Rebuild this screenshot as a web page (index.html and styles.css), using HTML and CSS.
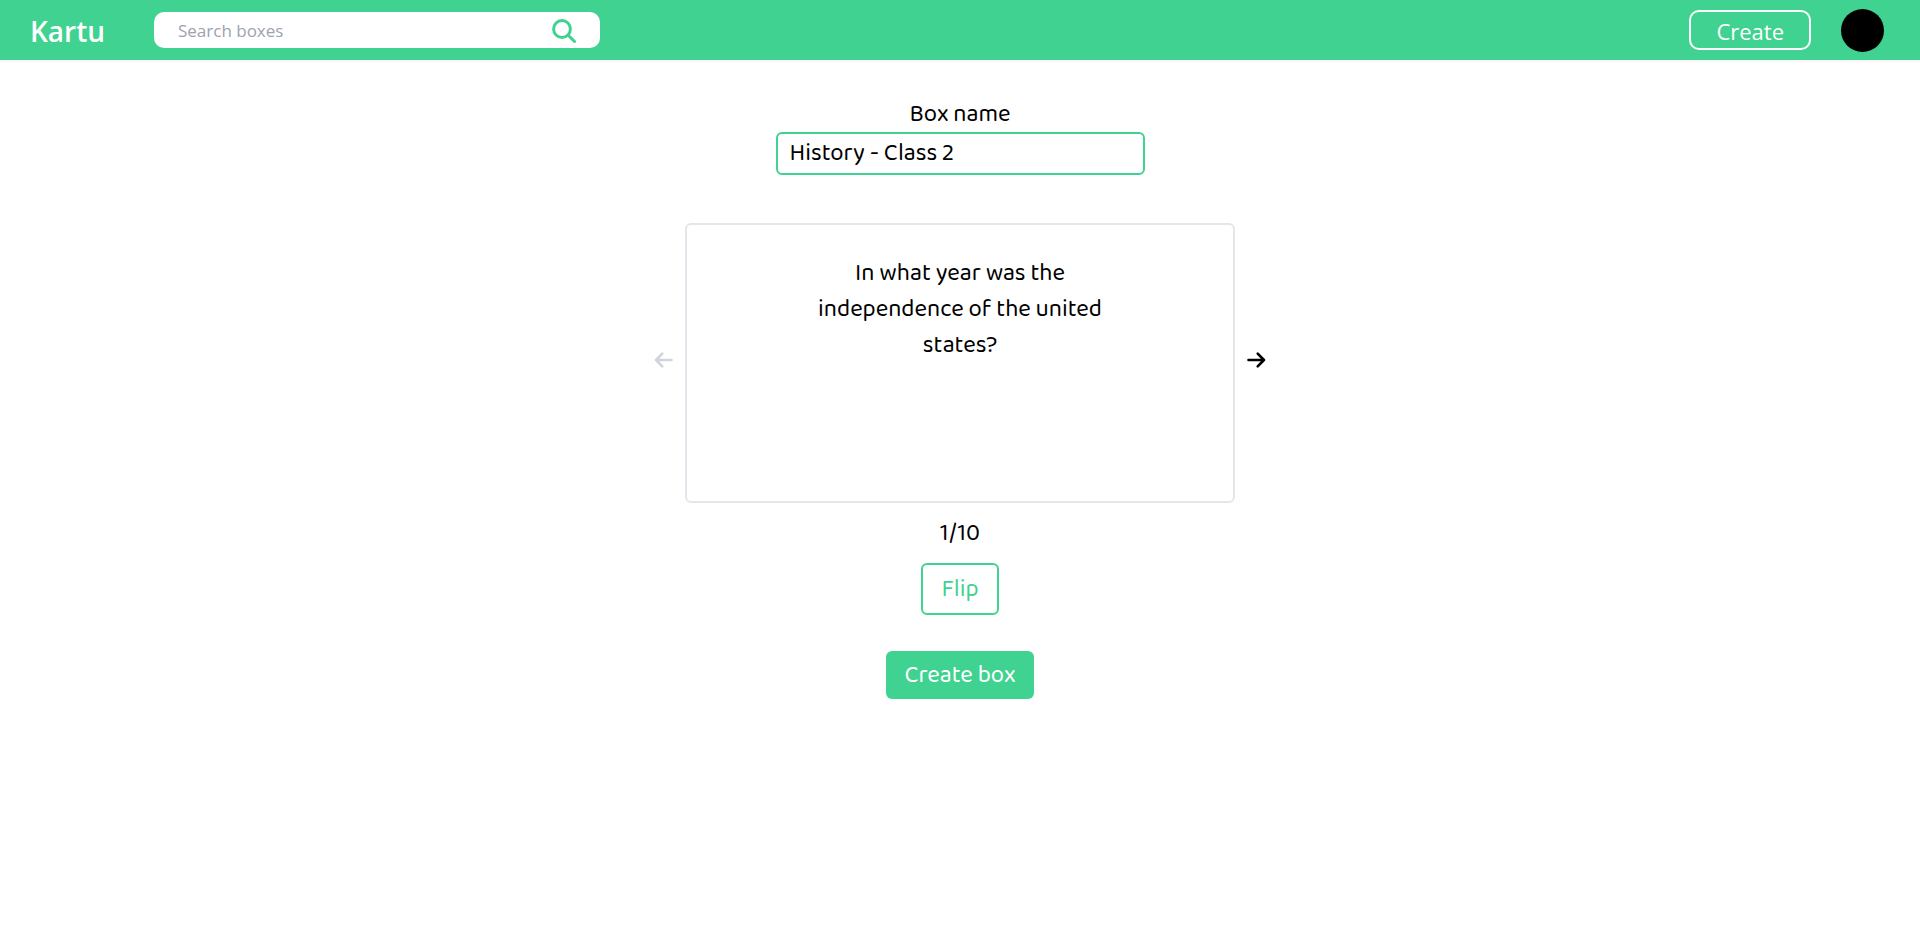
FILE: index.html
```html
<!DOCTYPE html>
<html lang="en">
<head>
  <meta charset="UTF-8">
  <meta name="viewport" content="width=device-width, initial-scale=1.0">
  <title>Kartu</title>
  <link rel="stylesheet" href="styles.css">
</head>
<body>

<header class="navbar">
  <a href="#" class="navbar__logo">Kartu</a>
  <form class="search">
    <input class="search__input" type="text" placeholder="Search boxes" aria-label="Search boxes">
    <button class="search__button" type="button" aria-label="Search">
      <svg width="24" height="24" viewBox="0 0 24 24" fill="none" stroke="currentColor" stroke-width="3" stroke-linecap="round">
        <circle cx="10" cy="10" r="8.400"/>
        <path d="M16 16l6.500 6.500"/>
      </svg>
    </button>
  </form>
  <a href="#" class="navbar__create">Create</a>
  <button class="navbar__avatar" type="button" aria-label="Profile"></button>
</header>

<main class="box">
  <label class="box__label" for="boxName">Box name</label>
  <input class="box__name" id="boxName" type="text" value="History - Class 2">

  <section class="cards">
    <button class="cards__arrow" type="button" aria-label="Previous card" disabled>
      <svg width="20" height="18" viewBox="0 0 20 18" fill="none" stroke="currentColor" stroke-width="2.600" stroke-linecap="round" stroke-linejoin="round">
        <path d="M9.300 2.700L3 9l6.300 6.300M3 9h15.500"/>
      </svg>
    </button>
    <div class="cards__card">
      <p class="cards__text">In what year was the independence of the united states?</p>
    </div>
    <button class="cards__arrow" type="button" aria-label="Next card">
      <svg width="20" height="18" viewBox="0 0 20 18" fill="none" stroke="currentColor" stroke-width="2.600" stroke-linecap="round" stroke-linejoin="round">
        <path d="M10.700 2.700L17 9l-6.300 6.300M17 9H1.500"/>
      </svg>
    </button>
  </section>

  <p class="box__count">1/10</p>
  <button class="button button--outline" type="button">Flip</button>
  <button class="button button--primary" type="submit">Create box</button>
</main>

</body>
</html>
```

FILE: styles.css
```css
* {
  box-sizing: border-box;
}
body {
  font-family: 'Baloo 2', Lato, sans-serif;
  font-size: 24px;
  line-height: 36px;
  background: #fff;
  color: #000;
  margin: 0;
}
button,
input {
  font: inherit;
}

.navbar {
  display: flex;
  align-items: center;
  height: 60px;
  padding: 0 36px 0 30px;
  background-color: #40d290;
  font-family: 'Segoe UI', 'Open Sans', sans-serif;
  box-shadow: 0 1px 4px rgba(0, 0, 0, 0.06);
}
.navbar__logo {
  width: 124px;
  padding-top: 2px;
  color: white;
  font-size: 28px;
  font-weight: 600;
  text-decoration: none;
}
.navbar__create {
  margin-left: auto;
  padding: 2px 25px 0;
  border: 2px solid white;
  border-radius: 10px;
  color: white;
  font-size: 22px;
  line-height: 34px;
  text-decoration: none;
}
.navbar__avatar {
  width: 43px;
  height: 43px;
  margin-left: 30px;
  padding: 0;
  border: none;
  border-radius: 50%;
  background-color: #000;
  cursor: pointer;
}

.search {
  display: flex;
  align-items: center;
  width: 446px;
  height: 36px;
  padding: 2px 24px 0;
  border-radius: 10px;
  background: white;
}
.search__input {
  flex: 1;
  min-width: 0;
  height: 34px;
  padding: 0;
  border: none;
  outline: none;
  background: transparent;
  font-size: 17px;
}
.search__input::placeholder {
  color: #9ca3af;
}
.search__button {
  display: flex;
  padding: 0;
  border: none;
  background: transparent;
  color: #40d290;
  cursor: pointer;
}

.box {
  display: flex;
  flex-direction: column;
  align-items: center;
  padding: 38px 16px;
}
.box__label {
  line-height: 34px;
}
.box__name {
  width: 369px;
  max-width: 100%;
  height: 43px;
  padding: 0 12px;
  border: 2px solid #40d290;
  border-radius: 6px;
  background: transparent;
}
.box__count {
  margin: 13px 0 11px;
}

.cards {
  display: flex;
  align-items: center;
  justify-content: center;
  gap: 12px;
  width: 100%;
  margin-top: 48px;
}
.cards__card {
  flex: 0 1 550px;
  min-height: 280px;
  padding: 31px 16px;
  border: 2px solid #e5e5eb;
  border-radius: 6px;
}
.cards__text {
  max-width: 300px;
  margin: 0 auto;
  text-align: center;
}
.cards__arrow {
  display: flex;
  padding: 0 0 6px;
  border: none;
  background: transparent;
  color: #000;
  cursor: pointer;
}
.cards__arrow:disabled {
  color: #d1d5db;
  cursor: default;
}

.button {
  padding: 7px 18px 5px;
  border: none;
  border-radius: 6px;
  cursor: pointer;
}
.button--outline {
  border: 2px solid #40d290;
  background: transparent;
  color: #40d290;
}
.button--primary {
  margin-top: 36px;
  background: #40d290;
  color: white;
}
```
